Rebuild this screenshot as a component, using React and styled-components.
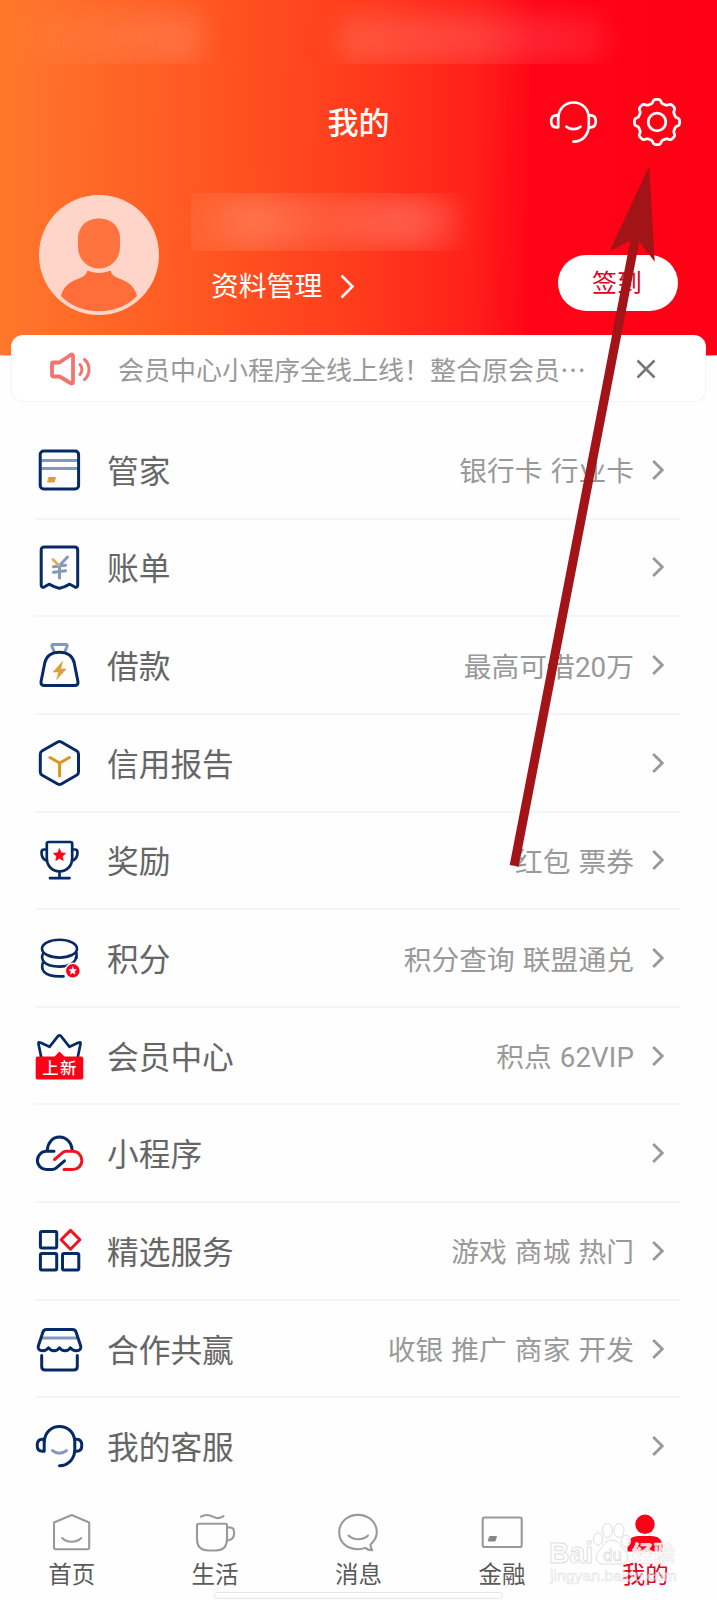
import styled, { createGlobalStyle } from "styled-components";

const NAVY = "#052a66";
const STEEL = "#8299bd";
const RED = "#fb0017";

const GlobalStyle = createGlobalStyle`
  * {
    box-sizing: border-box;
  }
  body {
    margin: 0;
    background-color: #fefefe;
    font-family: Roboto, "Noto Sans CJK SC", sans-serif;
  }
`;

const Page = styled.div`
  position: relative;
  width: 717px;
  height: 1600px;
  overflow: hidden;
  display: flex;
  flex-direction: column;
  background-color: #fefefe;
`;

const Header = styled.header`
  flex: none;
  height: 361px;
  background: linear-gradient(
    91deg,
    #ff782c 0%,
    #ff5a22 26%,
    #ff3a1c 51%,
    #ff201a 66%,
    #ff0417 74%,
    #ff0014 100%
  );
  clip-path: ellipse(2000px 361px at 50% 0);
`;
const StatusBar = styled.div`
  height: 64px;
  overflow: hidden;
  display: flex;
  align-items: flex-end;
  padding: 0 108px 0 22px;
  justify-content: space-between;
`;
const Blur = styled.div`
  width: ${(p) => p.$width}px;
  height: ${(p) => p.$height}px;
  border-radius: 16px;
  filter: blur(${(p) => p.$blur}px);
  background: ${(p) => p.$fill};
`;
const TitleBar = styled.div`
  height: 116px;
  display: grid;
  grid-template-columns: 1fr auto 1fr;
  align-items: center;
  padding: 0 36px;
`;
const Title = styled.h1`
  grid-column: 2;
  margin: 3px 0 0;
  font-size: 31px;
  line-height: 40px;
  font-weight: 500;
  color: white;
`;
const Actions = styled.div`
  display: flex;
  justify-content: flex-end;
  gap: 36px;
`;
const Profile = styled.div`
  display: flex;
  height: 136px;
  padding: 15px 39px 0;
`;
const ProfileText = styled.div`
  flex: 1;
  margin: -2px 0 0 32px;
`;
const Name = styled.div`
  width: 282px;
  height: 58px;
  overflow: hidden;
  display: flex;
  align-items: center;
  background: linear-gradient(90deg, rgba(255, 255, 255, 0.05), rgba(255, 255, 255, 0));
`;
const Manage = styled.div`
  display: flex;
  align-items: center;
  gap: 18px;
  margin: 16px 0 0 20px;
  font-size: 27.8px;
  line-height: 40px;
  color: white;
  svg {
    margin-top: -2px;
  }
`;
const SignButton = styled.button`
  width: 120px;
  height: 56px;
  margin-top: 60px;
  padding: 0 2px 4px 0;
  border: none;
  border-radius: 28px;
  background-color: white;
  color: #e0001a;
  font-family: inherit;
  font-size: 25px;
`;

const Notice = styled.div`
  flex: none;
  position: relative;
  height: 67px;
  margin: -26px 11px 0;
  padding: 0 49px 0 38px;
  display: flex;
  align-items: center;
  border: 1px solid #f4f4f4;
  border-top-color: white;
  border-radius: 12px;
  background-color: white;
`;
const NoticeText = styled.div`
  flex: 1;
  margin: 4px 0 0 26px;
  font-size: 26px;
  line-height: 40px;
  color: #999;
  white-space: nowrap;
`;

const List = styled.ul`
  flex: none;
  margin: 20px 36px 0 35px;
  padding: 0;
  list-style: none;
`;
const Row = styled.li`
  height: 97.65px;
  display: flex;
  align-items: center;
  border-bottom: 2px solid ${(p) => (p.$last ? "transparent" : "#f5f5f5")};
`;
const Label = styled.span`
  flex: 1;
  margin: 6px 0 0 24px;
  font-size: 31.7px;
  line-height: 46px;
  color: #666;
`;
const Value = styled.span`
  margin: 5px 18px 0 0;
  font-size: 27.7px;
  line-height: 40px;
  letter-spacing: 0.1px;
  word-spacing: 1px;
  color: #999;
  white-space: pre;
`;
const RowChevron = styled.svg`
  margin-right: 17px;
`;

const TabBar = styled.nav`
  flex: 1;
  display: grid;
  grid-template-columns: repeat(5, 1fr);
  padding-top: 14px;
`;
const Tab = styled.div`
  display: flex;
  flex-direction: column;
  align-items: center;
  gap: 4px;
  font-size: 23.5px;
  line-height: 34px;
  color: ${(p) => (p.$active ? "#e60019" : "#5a5a5a")};
`;

const HomeIndicator = styled.div`
  position: absolute;
  left: 214px;
  top: 1592px;
  width: 289px;
  height: 7px;
  border-radius: 4px;
  background-color: white;
  border: 1px solid #e6e6e6;
`;
const Overlay = styled.svg`
  position: absolute;
  left: 0;
  top: 0;
  pointer-events: none;
`;

const Icon = ({ size = 48, view = 48, color = NAVY, width = 3, children }) => (
  <svg
    width={size}
    height={size}
    viewBox={`0 0 ${view} ${view}`}
    fill="none"
    stroke={color}
    strokeWidth={width}
    strokeLinecap="round"
    strokeLinejoin="round"
    overflow="visible"
  >
    {children}
  </svg>
);

const Headset = ({ color, smile, width }) => (
  <Icon color={color} width={width}>
    <path d="M9.2 29.3H7.4C4 29.3 2.2 27 2.2 23.3s1.8-6 5.2-6h1.8z" />
    <path d="M39.8 17.3h1.8c3.4 0 5.2 2.3 5.2 6s-1.8 6-5.2 6h-1.8" />
    <path d="M9.2 19C10.3 10 16.5 4.5 24.5 4.5c8.8 0 15.3 6.6 15.3 15.5v7.5c0 9-6.3 16.2-15.3 16.2" />
    <path d="M17.5 28.7c3.8 3.3 10.2 3.3 14 0" stroke={smile} />
  </Icon>
);

// eight rounded teeth
const gearPath = () => {
  const points = [];
  for (let i = 0; i < 192; i++) {
    const a = (i / 192) * Math.PI * 2;
    const r = 20.8 + 1.9 * Math.tanh(2 * Math.cos(8 * a));
    points.push(`${(24 + r * Math.cos(a)).toFixed(2)} ${(24 + r * Math.sin(a)).toFixed(2)}`);
  }
  return `M${points.join("L")}Z`;
};

const Gear = () => (
  <Icon color="white" width={2.8}>
    <path d={gearPath()} />
    <circle cx="24" cy="24" r="8.8" />
  </Icon>
);

const Avatar = () => (
  <svg width="120" height="120" viewBox="0 0 120 120">
    <circle cx="60" cy="60" r="60" fill="#ffd5c9" />
    <path
      d="M60 23.5c12.5 0 21 8.3 21 20v8C81 64.5 71.5 73.5 60 73.5S39 64.5 39 51.5v-8c0-11.7 8.5-20 21-20Z"
      fill="#ff733f"
    />
    <path
      d="M48.5 75.5c7.5 3.3 15.5 3.3 23 0 1.5 5 4.500 6.500 10 8.500C91 87.500 96 93 98 101c-9 9.500-23 15.200-38 15.200S31 110.500 22 101c2-8 7-13.500 16.500-17 5.500-2 8.500-3.500 10-8.500Z"
      fill="#ff6d3a"
    />
  </svg>
);

const starPoints = (cx, cy, r) =>
  Array.from({ length: 10 }, (_, i) => {
    const a = (Math.PI / 5) * i - Math.PI / 2;
    const d = i % 2 ? r * 0.48 : r;
    return `${cx + d * Math.cos(a)},${cy + d * Math.sin(a)}`;
  }).join(" ");

const CardIcon = () => (
  <Icon>
    <path d="M6.5 14.4h36M6.5 22.4h36" stroke={STEEL} strokeLinecap="butt" />
    <rect x="5.2" y="5" width="38.4" height="38" rx="3.5" />
    <path d="M14 31.5h6.5l-1.3 4.5h-6.2z" fill="#dc9f3c" stroke="#dc9f3c" strokeWidth="1" />
  </Icon>
);
const BillIcon = () => (
  <Icon>
    <path d="M9.5 4h30.2q3 0 3 3v35.3c0 2-1.5 2.3-3.2 1.5l-4.8-2.6-5 2.4-5.3 1.8-5.3-1.8-5-2.4-4.6 2.6c-2 .8-3.3.5-3.3-1.5V7Q6 4 9.5 4Z" />
    <path d="M24.5 22.5 32.5 14M24.5 22.5V35M18.5 23.8l12-1.6M18.5 29.3l12-1.6" stroke={STEEL} strokeWidth="3" />
    <path d="M18 16.5 23.5 22" stroke="#dfae62" strokeWidth="3" />
  </Icon>
);
const BagIcon = () => (
  <Icon>
    <path d="M19.5 11.5 17 5.5Q16.5 3.5 18 3.5h13q1.5 0 1 2l-2.5 6" stroke={STEEL} />
    <path d="M24.5 11.2c8 0 13 3.600 14.700 10.500l3.700 18.500c.5 3-.7 4.300-3.300 4.300H9.400c-2.600 0-3.800-1.300-3.300-4.300l3.700-18.500C11.500 14.800 16.500 11.200 24.500 11.200Z" />
    <path d="m27.500 20.500-9.500 10.500h5.500L21.700 38.500l9.500-10.500h-5.300z" fill="#dc9f3c" stroke="#dc9f3c" strokeWidth="0.6" />
  </Icon>
);
const ReportIcon = () => (
  <Icon>
    <path d="M22.7 3q1.800-1 3.600 0l15.200 8.800q2 1.100 2 3.300v17.800q0 2.200-2 3.300l-15.200 8.800q-1.800 1-3.600 0L7.300 36.200q-2-1.100-2-3.300V15.100q0-2.200 2-3.300z" />
    <path d="M15 18.500l9.600 5.500 9.800-5.500M24.6 24v13" stroke="#d9961c" />
  </Icon>
);
const TrophyIcon = () => (
  <Icon width={2.7}>
    <path d="M13.500 6h22q1.700 0 1.700 1.700v14.800C37.200 30 31.500 35.500 24.500 35.500S11.800 30 11.800 22.500V7.700Q11.800 6 13.500 6ZM24.500 35.500V42M15 42.200h19.500" />
    <path d="M11.500 13.500H9q-2.500 0-2.500 3c0 4 1.800 7 5.500 8.200M37.500 13.500H40q2.500 0 2.500 3c0 4-1.800 7-5.500 8.200" />
    <polygon points={starPoints(24.5, 19.3, 6.3)} fill={RED} stroke={RED} strokeWidth="0.8" />
  </Icon>
);
const CoinsIcon = () => (
  <Icon width={2.6}>
    <ellipse cx="24.5" cy="14.7" rx="17.5" ry="8.900" />
    <path d="M8 19.500C5.500 25 8 32.600 24.500 32.600c9 0 16.500-4 16.500-9.600" />
    <path d="M8 28.500C5.500 35 8 42.400 24.500 42.400h4M41.500 19v5" />
    <circle cx="37.8" cy="36.8" r="8.2" fill="white" stroke="none" />
    <circle cx="37.8" cy="36.8" r="6.8" fill={RED} stroke="none" />
    <polygon points={starPoints(37.8, 36.9, 4)} fill="white" stroke="white" strokeWidth="0.4" />
  </Icon>
);
const VipIcon = () => (
  <Icon width={2.7}>
    <path d="M6.200 25 3.500 12q-.4-2.500 1.800-1.400L14.500 14.800 23 4.200q1.500-1.700 3 0L34.500 14.800l9.200-4.200q2.200-1.100 1.800 1.400L42.800 25" />
    <path
      d="M2.700 24.400H19.500L24.500 19.500 29.500 24.400H46.300q2 0 2 2V45.600q0 2-2 2H2.700q-2 0-2-2V26.400q0-2 2-2Z"
      fill={RED}
      stroke="none"
    />
    <text
      x="24.9"
      y="42.3"
      fill="white"
      stroke="none"
      fontSize="16.4"
      fontWeight="500"
      textAnchor="middle"
      letterSpacing="1.2"
    >
      上新
    </text>
  </Icon>
);
const CloudIcon = () => (
  <Icon>
    <path d="M12.200 21.300C12.800 13.500 17.800 8 24.500 8S36.300 13.200 37.200 20.500" />
    <path d="M19 22.300h-7.500a9.100 9.100 0 0 0 0 18.200h5.500q2.500 0 4.300-1.600L29.500 31.800" />
    <path d="M19.500 30.500 27.300 23.800q1.800-1.500 4-1.500h6.500a9.100 9.100 0 0 1 0 18.200H29" stroke="#ee1420" />
  </Icon>
);
const GridIcon = () => (
  <Icon>
    <rect x="5.4" y="4.400" width="16.3" height="16.6" rx="1.5" />
    <rect x="5.4" y="26.4" width="16.3" height="16.6" rx="1.5" />
    <rect x="27.5" y="26.4" width="16.3" height="16.6" rx="1.5" />
    <path d="m35.5 3.400 9.400 9.400-9.400 9.400-9.400-9.400z" stroke="#ee1420" />
  </Icon>
);
const ShopIcon = () => (
  <Icon>
    <path d="M7 13h35" stroke={STEEL} strokeLinecap="butt" />
    <path d="M11.500 4.500h26q3 0 3.700 3L45.700 21c.8 3-1.200 4.800-4.200 4.800-2.500 0-4.700-1-6-3-1.300 2-3 3-5.500 3s-4.200-1-5.500-3c-1.300 2-3 3-5.500 3s-4.200-1-5.500-3c-1.300 2-3.500 3-6 3-3 0-5-1.800-4.200-4.800L7.800 7.500q.7-3 3.700-3Z" />
    <path d="M6.700 30.500V41.500q0 3.500 3.500 3.500h28.600q3.500 0 3.500-3.500V30.500" />
  </Icon>
);

const tabIcon = { size: 44, view: 44, color: "#999", width: 2.1 };

const HomeTab = () => (
  <Icon {...tabIcon}>
    <path d="M4 12.500 21.700 5l17.500 7.500V37.500q0 1.700-1.700 1.700H5.700q-1.700 0-1.700-1.700z" />
    <path d="M12.200 28c4.500 5 14.500 5 19 0" />
  </Icon>
);
const CupTab = () => (
  <Icon {...tabIcon}>
    <path d="M5.500 13.700h27q1.500 0 1.500 1.500V29q0 11.500-11.500 11.500h-7Q4 40.500 4 29V15.200q0-1.500 1.500-1.500Z" />
    <path d="M34 17.500h2.500q4.500 0 4.500 4V24q0 6-6.800 6.500M8 6.700c4-2.500 8-2.200 12 0s7 2 10.500-.5" />
  </Icon>
);
const MessageTab = () => (
  <Icon {...tabIcon}>
    <path d="M34.500 34.500c3.300-3 6.300-7 6.300-12.300 0-10-8.300-17.300-18.800-17.300S3.200 12.200 3.200 22.200c0 10.500 8.300 17 18.800 17 2.500 0 5-.4 7.200-1.300 2 1.700 4.500 2.400 7 2.300-1.200-1.500-1.700-3.500-1.700-5.700Z" />
    <path d="M12.500 25.500c5 5 14.500 5 19.500 0" />
  </Icon>
);
const FinanceTab = () => (
  <Icon {...tabIcon}>
    <rect x="2.700" y="7.500" width="39" height="29.500" rx="1.800" />
    <path d="M10 26.500h6.500L15 31H8.500z" fill="#888" stroke="#888" strokeWidth="1" />
  </Icon>
);
const MineTab = () => (
  <Icon {...tabIcon}>
    <circle cx="22" cy="14.300" r="9.700" fill={RED} stroke="none" />
    <path d="M4.500 41.500v-4Q4.500 26 16 26h12q11.500 0 11.500 11.500v4z" fill={RED} stroke="none" />
  </Icon>
);

const Chevron = () => (
  <RowChevron width="12" height="20" viewBox="0 0 12 20" fill="none" stroke="#999" strokeWidth="2.8">
    <path d="m1.200 1 9 9-9 9" />
  </RowChevron>
);

const rows = [
  { icon: <CardIcon />, label: "管家", value: "银行卡 行业卡" },
  { icon: <BillIcon />, label: "账单" },
  { icon: <BagIcon />, label: "借款", value: "最高可借20万" },
  { icon: <ReportIcon />, label: "信用报告" },
  { icon: <TrophyIcon />, label: "奖励", value: "红包 票券" },
  { icon: <CoinsIcon />, label: "积分", value: "积分查询 联盟通兑" },
  { icon: <VipIcon />, label: "会员中心", value: "积点 62VIP" },
  { icon: <CloudIcon />, label: "小程序" },
  { icon: <GridIcon />, label: "精选服务", value: "游戏 商城 热门" },
  { icon: <ShopIcon />, label: "合作共赢", value: "收银 推广 商家 开发" },
  { icon: <Headset color={NAVY} smile={STEEL} />, label: "我的客服" },
];

const tabs = [
  { icon: <HomeTab />, label: "首页" },
  { icon: <CupTab />, label: "生活" },
  { icon: <MessageTab />, label: "消息" },
  { icon: <FinanceTab />, label: "金融" },
  { icon: <MineTab />, label: "我的", active: true },
];

const Watermark = () => (
  <g
    fill="white"
    fillOpacity="0.85"
    stroke="#dedede"
    strokeWidth="1"
    fontFamily='"Liberation Sans", "Noto Sans CJK SC", sans-serif'
    fontWeight="700"
  >
    <text x="549" y="1563" fontSize="30" textLength="44" lengthAdjust="spacingAndGlyphs">
      Bai
    </text>
    <ellipse cx="598" cy="1539" rx="4.5" ry="6" />
    <ellipse cx="607.5" cy="1530.5" rx="5" ry="7" />
    <ellipse cx="619" cy="1530.5" rx="5" ry="7" />
    <ellipse cx="626" cy="1541" rx="4.5" ry="6" />
    <path d="M612 1540c7 0 8 6 13 11 5 6 3 13-4 13h-18c-7 0-9-7-4-13 5-5 6-11 13-11Z" />
    <text x="603" y="1561" fontSize="17" fontWeight="400" strokeWidth="0.8">
      du
    </text>
    <text x="632" y="1561" fontSize="21.5" stroke="#e8e8e8" strokeWidth="0.7">
      经验
    </text>
    <text
      x="550"
      y="1581"
      fontSize="15"
      fontWeight="400"
      fillOpacity="0.4"
      strokeWidth="0.5"
      textLength="127"
      lengthAdjust="spacingAndGlyphs"
    >
      jingyan.baidu.com
    </text>
  </g>
);

const App = () => {
  return (
    <>
      <GlobalStyle />
      <Page>
        <Header>
          <StatusBar>
            <Blur
              $width={180}
              $height={52}
              $blur={13}
              $fill="linear-gradient(90deg, rgba(255,150,90,.1), rgba(255,150,120,.38))"
            />
            <Blur
              $width={270}
              $height={50}
              $blur={13}
              $fill="linear-gradient(90deg, rgba(255,130,110,.36), rgba(255,120,120,.36) 50%, rgba(255,90,100,.2))"
            />
          </StatusBar>
          <TitleBar>
            <Title>我的</Title>
            <Actions>
              <Headset color="white" smile="white" width={2.7} />
              <Gear />
            </Actions>
          </TitleBar>
          <Profile>
            <Avatar />
            <ProfileText>
              <Name>
                <Blur
                  $width={270}
                  $height={50}
                  $blur={12}
                  $fill="linear-gradient(90deg, rgba(255,160,130,0), rgba(255,160,130,.42) 22%, rgba(255,140,120,.28) 50%, rgba(255,150,140,.42) 82%, rgba(255,150,140,.15))"
                />
              </Name>
              <Manage>
                资料管理
                <svg width="15" height="25" viewBox="0 0 15 25" fill="none" stroke="white" strokeWidth="2.6">
                  <path d="m1.500 1.500 11 11-11 11" />
                </svg>
              </Manage>
            </ProfileText>
            <SignButton>签到</SignButton>
          </Profile>
        </Header>
        <Notice>
          <svg
            width="42"
            height="34"
            viewBox="0 0 42 34"
            fill="none"
            stroke="#f4736f"
            strokeWidth="3.8"
            strokeLinecap="round"
            strokeLinejoin="round"
          >
            <path d="M3.500 10.500h6L20.500 3q2.500-1.500 2.500 1.500v25q0 3-2.500 1.500L9.500 24.500h-6q-1.500 0-1.500-1.500V12q0-1.500 1.500-1.500Z" />
            <path d="M30 12.500c2.500 2.500 2.500 7.500 0 10M34.500 7.500c6 5 6 15 0 20" strokeWidth="3" />
          </svg>
          <NoticeText>会员中心小程序全线上线！整合原会员⋯</NoticeText>
          <svg width="20" height="20" viewBox="0 0 20 20" stroke="#777" strokeWidth="2.6">
            <path d="m1.500 1.500 17 17M18.500 1.500l-17 17" />
          </svg>
        </Notice>
        <List>
          {rows.map((row, i) => (
            <Row key={row.label} $last={i === rows.length - 1}>
              {row.icon}
              <Label>{row.label}</Label>
              {row.value && <Value>{row.value}</Value>}
              <Chevron />
            </Row>
          ))}
        </List>
        <TabBar>
          {tabs.map((tab) => (
            <Tab key={tab.label} $active={tab.active}>
              {tab.icon}
              {tab.label}
            </Tab>
          ))}
        </TabBar>
        <HomeIndicator />
        <Overlay width="717" height="1600" viewBox="0 0 717 1600">
          <Watermark />
          <path
            d="M649.3 166 654.7 261.7 639.3 241.7 518.7 866.6 509.7 865 630.3 240.5 609.3 251.7Z"
            fill="#a31419"
          />
        </Overlay>
      </Page>
    </>
  );
};

export default App;
